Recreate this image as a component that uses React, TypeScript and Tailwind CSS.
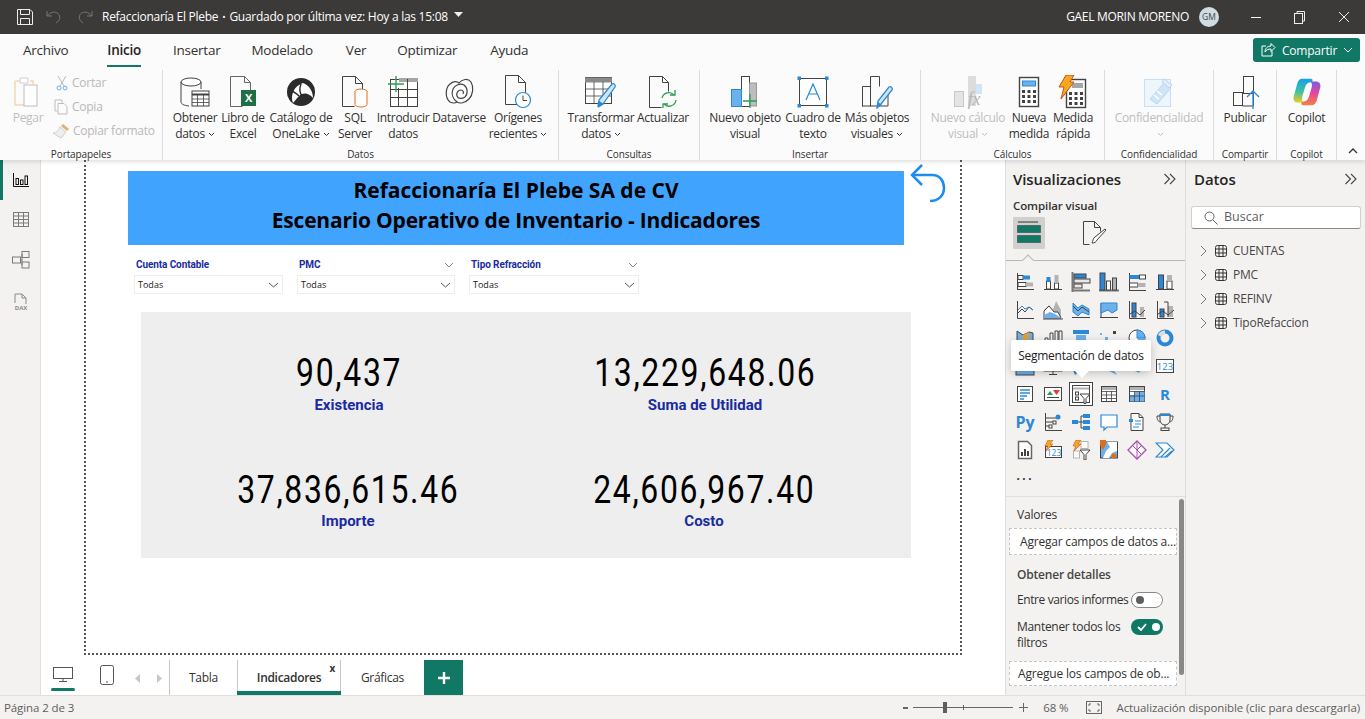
import React from "react";

const D = "#444342", B = "#2b88d8", L = "#6cb0ec", G = "#b3b3b3";

const S = ({ w = 20, h = 20, vb, children, className = "" }: { w?: number; h?: number; vb?: string; children?: React.ReactNode; className?: string }) => (
  <svg width={w} height={h} viewBox={vb ?? `0 0 ${w} ${h}`} fill="none" className={className}>{children}</svg>
);

const axisL = <path d="M2.5 1v17.5H19" stroke={D} />;
const axisB = <path d="M1 17.5h18" stroke={D} />;

const vizRow: React.ReactNode[] = [
  <S><path d="M2.5 1v17M2 17.5h17" stroke={D} /><rect x="3" y="3.5" width="5" height="4" fill="white" stroke={D} /><rect x="8" y="3.5" width="7" height="4" fill={B} /><rect x="3" y="10.5" width="8" height="4" fill="white" stroke={D} /><rect x="11" y="10.5" width="7" height="4" fill={G} /></S>,
  <S><path d="M1 17.5h18" stroke={D} /><rect x="3.5" y="9" width="4" height="8" fill="white" stroke={D} /><rect x="3.5" y="5" width="4" height="5" fill={B} /><rect x="11.5" y="11" width="4" height="6" fill="white" stroke={D} /><rect x="11.5" y="3" width="4" height="8" fill={G} /></S>,
  <S><path d="M1.5 0v20M1 18.5h18" stroke="#777" strokeWidth="2" /><rect x="3" y="2" width="12" height="4" fill={B} stroke={D} /><rect x="3" y="7" width="16" height="4" fill="#e8e8e8" stroke={D} /><rect x="3" y="12" width="8" height="4" fill="#e8e8e8" stroke={D} /></S>,
  <S><path d="M0 18.5h20" stroke="#777" strokeWidth="2" /><rect x="1" y="1" width="5" height="17" fill={B} stroke={D} /><rect x="7.5" y="9" width="4" height="9" fill="white" stroke={D} /><rect x="13.5" y="6" width="4" height="12" fill={G} stroke={D} /></S>,
  <S><path d="M2.5 1v18" stroke={D} /><rect x="2.5" y="3" width="10" height="4" fill={B} /><rect x="12.5" y="3" width="6" height="4" fill="white" stroke={D} /><rect x="2.5" y="11" width="8" height="4" fill="white" stroke={D} /><rect x="10.5" y="11" width="8" height="4" fill={G} /><path d="M2 18.5h17" stroke={D} /></S>,
  <S><path d="M1 17.5h18" stroke={D} /><rect x="3.5" y="3" width="5" height="14" fill={B} stroke={D} /><rect x="12" y="9" width="5" height="8" fill="white" stroke={D} /><rect x="12" y="3" width="5" height="6" fill={G} /></S>,

  <S>{axisL}<path d="M3 13l4-4 3 3 4-5 4 3" stroke={D} /><path d="M3 10l4-4 3 3 4-2 4 3" stroke={B} /></S>,
  <S><path d="M0 19h20" stroke={D} /><path d="M1 18v-8l5-5 4 5 3-9 5 9v8z" fill={G} /><path d="M1 18v-7l5-5 5 6 4 0 3 6z" fill="white" stroke={D} /><path d="M1 18v-3l6-3 5 2 6 4z" fill={L} /></S>,
  <S>{axisB}<path d="M2 3l5 5 4-3 7 4v6l-7-3-4 4-5-4z" fill={L} stroke={B} /><path d="M2 6l5 5 4-4 7 5" stroke={D} /></S>,
  <S><path d="M1 17.5h18M2 3v14" stroke={D} /><path d="M2 3h16v7l-5 3-4-3-7 3z" fill={L} stroke={B} /></S>,
  <S>{axisL}<rect x="5" y="3" width="4" height="14" fill={B} stroke={D} /><rect x="13" y="7" width="4" height="10" fill={G} /><path d="M3 14l5-3 5 4 5-5" stroke={D} /></S>,
  <S>{axisL}<rect x="5" y="9" width="4" height="8" fill={B} stroke={D} /><rect x="13" y="6" width="5" height="11" fill={G} /><path d="M9 2h4v15" stroke={D} /><path d="M3 14l5-3 5 4 6-5" stroke={D} /></S>,

  <S><path d="M2 3l6 4 6-3 4 1v12H2z" fill={L} stroke={D} /><path d="M8 7l-1 8 7-1 0-10z" fill="#e1a040" /></S>,
  <S>{axisB}<path d="M2 17v-7h3v7M7 17V5h3v12M12 17V3h3v14M16 17V3h3v14" stroke={D} /></S>,
  <S><rect x="2" y="2" width="16" height="4" fill={B} /><rect x="5" y="7" width="10" height="5" fill={L} /><rect x="7" y="13" width="6" height="5" fill={B} /></S>,
  <S><rect x="1" y="5" width="2" height="2" fill={L} /><rect x="6" y="9" width="3" height="3" fill={L} /><rect x="14" y="3" width="3" height="3" fill={D} /><rect x="9" y="14" width="2" height="2" fill={L} /></S>,
  <S><circle cx="10" cy="10" r="8" fill="white" stroke={D} /><path d="M10 2a8 8 0 0 1 8 8h-8z" fill={L} stroke={B} /><path d="M10 10h8a8 8 0 0 1-4 7z" fill={L} /></S>,
  <S><circle cx="10" cy="10" r="6.5" stroke={B} strokeWidth="4" /><path d="M3 7a7.500 7.500 0 0 1 7-4.500v4A3.500 3.500 0 0 0 6.500 9z" fill="#ddd" /></S>,

  <S><rect x="1" y="1" width="18" height="18" fill={L} stroke={D} /></S>,
  <S><rect x="1" y="1" width="18" height="14" stroke={D} /><path d="M6 18.500h8M10 15v3" stroke={D} /></S>,
  <S><path d="M2 14l6 2-4 3z" fill={B} /></S>,
  <S><path d="M8 14l10 5-4-6z" fill={L} /></S>,
  <S><path d="M4 6l3 2 5-1 4 4-4 6-6-3z" fill={L} /></S>,
  <S><rect x="1.500" y="3.500" width="17" height="13" fill="white" stroke={D} /><text x="10" y="14" textAnchor="middle" fontSize="9.500" fontFamily="'Open Sans',sans-serif" fill={B}>123</text></S>,

  <S><rect x="2.500" y="2.500" width="15" height="15" fill="white" stroke={D} /><path d="M5 6h10M5 9h10M5 12h7M5 15h4" stroke={B} strokeWidth="1.400" /></S>,
  <S><rect x="1.500" y="3.500" width="17" height="13" fill="white" stroke={D} /><path d="M4 11l3-4 3 4z" fill="#2d9d54" /><path d="M10 6h7l-3.500 5z" fill="#e23d3d" /><path d="M4 13.500h12" stroke={D} /></S>,
  <S w={24} h={24}><rect x="0.500" y="0.500" width="23" height="23" fill="white" stroke={D} /><rect x="3.500" y="3.500" width="17" height="17" stroke={D} /><path d="M4 6.500h16" stroke={G} strokeWidth="2" /><rect x="6.500" y="10" width="3" height="3" stroke={D} /><rect x="6.500" y="15" width="3" height="3" stroke={D} /><path d="M11 12h10l-4 4.500v5h-2v-5z" fill="white" stroke={D} /></S>,
  <S><rect x="2.500" y="2.500" width="15" height="15" fill="white" stroke={D} /><path d="M3 4.500h14" stroke={G} strokeWidth="3" /><path d="M2.500 7.500h15M2.500 11h15M2.500 14.500h15M7.500 7v10M12.500 7v10" stroke={D} strokeWidth=".8" /></S>,
  <S><rect x="2.500" y="2.500" width="15" height="15" fill="white" stroke={D} /><path d="M3 4.500h14" stroke={G} strokeWidth="3" /><rect x="8" y="7" width="9.500" height="10.500" fill={L} /><rect x="3" y="11" width="5" height="6.500" fill={L} /><path d="M2.500 7.500h15M2.500 12h15M7.500 7v10.500M12.500 7v10.500" stroke={D} strokeWidth=".8" /></S>,
  <S><text x="10" y="16" textAnchor="middle" fontSize="15" fontWeight="700" fontFamily="'Open Sans',sans-serif" fill={B}>R</text></S>,

  <S w={22} h={20}><text x="11" y="16" textAnchor="middle" fontSize="16" fontWeight="700" fontFamily="'Open Sans',sans-serif" fill={B}>Py</text></S>,
  <S>{axisL}<path d="M3 6h11M3 10h7M3 14h4" stroke={D} /><circle cx="15" cy="5" r="2.500" fill={B} /><rect x="10" y="9" width="3" height="3" fill="white" stroke={D} /><rect x="6" y="13" width="3" height="3" fill="white" stroke={D} /></S>,
  <S><rect x="1" y="8" width="6" height="4" fill={B} /><path d="M7 10h3M10 4v12M10 4h2M10 10h2M10 16h2" stroke={D} /><rect x="12" y="2" width="7" height="4" fill={B} /><rect x="12" y="8" width="7" height="4" fill={B} /><rect x="12" y="14" width="7" height="4" fill={B} /></S>,
  <S><path d="M2 3h16v12H8l-3 3v-3H2z" fill="white" stroke={B} strokeWidth="1.200" /></S>,
  <S><path d="M4 1.500h8l4 4v13H4z" fill="white" stroke={D} /><path d="M12 1.500v4h4" stroke={D} /><rect x="2" y="7" width="4" height="3" fill={B} /><path d="M8 9h6M8 12h6M6 15h6" stroke={B} /></S>,
  <S><path d="M5 2h10v6a5 5 0 0 1-10 0zM5 4H2c0 4 1 5 3 6M15 4h3c0 4-1 5-3 6M10 13v3" stroke={D} /><rect x="5" y="2" width="10" height="2" fill={B} /><rect x="6" y="16" width="8" height="2.500" stroke={D} /></S>,

  <S><path d="M3.500 1.500h9l4 4v13h-13z" fill="white" stroke="#666" strokeWidth="1.500" /><rect x="6" y="12" width="2" height="4" fill={D} /><rect x="9" y="9" width="2" height="7" fill={D} /><rect x="12" y="11" width="2" height="5" fill={D} /></S>,
  <S><rect x="2.500" y="6.500" width="16" height="11" fill="white" stroke={D} /><text x="11" y="15.500" textAnchor="middle" fontSize="8.500" fontFamily="'Open Sans',sans-serif" fill={B}>123</text><path d="M5 0h5L7 4h3L3 11l1.500-5H2z" fill="#f6a81e" stroke="#c8501e" strokeWidth=".6" /></S>,
  <S><rect x="10" y="1.500" width="7" height="7" fill="white" stroke={G} /><rect x="2.500" y="11" width="6" height="7" fill="white" stroke={G} /><path d="M9 10h10l-4 4.500V20h-2v-5.500z" fill="white" stroke={D} /><path d="M5 0h5L7 4h3L3 11l1.500-5H2z" fill="#f6a81e" stroke="#c8501e" strokeWidth=".6" /></S>,
  <S><rect x="1.500" y="2" width="17" height="16" fill={L} stroke={D} /><path d="M8 2l3 5-4 4-3 7h6l3-5 5-2V2z" fill="white" /><path d="M1 0h6v5l-3 5-3-5z" fill="#d9701f" /><circle cx="15" cy="16" r="2.500" fill="#d9701f" /></S>,
  <S><path d="M10 1l9 9-9 9-9-9z" fill="white" stroke="#a54fb0" strokeWidth="1.300" /><path d="M10 1v18M5 5l10 10M15 5l-5 5" stroke="#a54fb0" /></S>,
  <S><path d="M1 3h11l7 7-7 7H1l7-7z" fill="white" stroke={B} strokeWidth="1.200" /><path d="M6 17l9-9M10 17l7-6" stroke={B} strokeWidth="1.200" /></S>,
];

const ribbonText = "text-[12px] leading-[15.5px] tracking-[-0.3px]";

const Chev = () => <svg width="7" height="5" viewBox="0 0 7 5" className="inline ml-[3px] align-[1px]" fill="none"><path d="M1 1l2.500 2.500L6 1" stroke="currentColor" /></svg>;

function Btn({ w, icon, a, b, chev, dis }: { w: number; icon: React.ReactNode; a: string; b?: string; chev?: boolean; dis?: boolean }) {
  return (
    <div className={`flex flex-col items-center whitespace-nowrap ${ribbonText} ${dis ? "text-[#bfbebd]" : "text-[#323130]"}`} style={{ width: w }}>
      <div className="h-[40px] pt-[4px] flex items-center justify-center">{icon}</div>
      <div>{a}</div>
      {b && <div>{b}{chev && <Chev />}</div>}
      {!b && chev && <div><Chev /></div>}
    </div>
  );
}

function Group({ w, pl = 0, label, center, children }: { w: number; pl?: number; label: string; center?: boolean; children: React.ReactNode }) {
  return (
    <div className="flex flex-col h-[90px] border-r border-[#dcdbd9] shrink-0 relative" style={{ width: w }}>
      <div className={`flex flex-1 ${center ? "justify-center" : ""}`} style={{ paddingLeft: pl }}>{children}</div>
      <div className="text-[10px] leading-[12px] text-[#323130] text-center tracking-[-0.1px]">{label}</div>
    </div>
  );
}

const Icons = {
  db: <S w={32} h={32}><ellipse cx="12" cy="6" rx="10" ry="4" fill="white" stroke={D} /><path d="M2 6v20c0 2 3 3.500 8 4M22 6v7" stroke={D} /><rect x="13" y="15" width="17" height="15" fill="white" stroke={D} /><path d="M13 18.500h17" stroke={D} strokeWidth="2" /><path d="M13 23h17M13 26.500h17M18.500 18v12M24.500 18v12" stroke={D} strokeWidth=".8" /></S>,
  xl: <S w={28} h={32}><path d="M1.500 .500h14l6 6v13M1.500 .500v30h12M15.500 .500v6h6" stroke="#666" /><rect x="12" y="14" width="15" height="16" fill="#1e7145" /><text x="19.500" y="26" textAnchor="middle" fontSize="11" fontWeight="700" fontFamily="'Open Sans',sans-serif" fill="white">X</text></S>,
  lake: <S w={30} h={32}><circle cx="15" cy="16" r="14" fill="#2b2b2b" /><path d="M7 27C4 19 8 10 17 7c6 2 10 8 10 15-4-5-10-6-14-2-2 2-4 5-6 7z" fill="white" /><path d="M15 8c-2 5-1 10 2 13 3 2 6 3 9 2" stroke="#2b2b2b" strokeWidth="1.400" /><path d="M13 20c-3-3-5-5-9-5" stroke="#2b2b2b" strokeWidth="1.400" /></S>,
  sql: <S w={28} h={32}><path d="M1.500 .500h13l7 7v11M1.500 .500v30h12M14.500 .500v7h7" stroke={D} /><ellipse cx="20" cy="15.500" rx="6" ry="2.500" fill="white" stroke="#d9701f" /><path d="M14 15.500v13c0 1.500 3 2.500 6 2.500s6-1 6-2.500v-13" fill="white" stroke="#d9701f" /></S>,
  enter: <S w={32} h={32}><rect x="3.500" y="3.500" width="27" height="27" fill="white" stroke={D} /><path d="M12 2h19v4H12z" fill="#a6a6a6" /><path d="M3 13.500h28M3 21.500h28M11.500 12v19M20.500 3v28" stroke={D} /><path d="M9 0v16M1 8h16" stroke="#2d9d54" strokeWidth="1.400" /></S>,
  dv: <S w={30} h={32}><path d="M6 26C1 22 1 12 6 8c3-3 7-3 9-1 3-4 9-5 12-1 3 5 2 13-2 17-4 4-9 5-12 3-3 2-5 1-7 0z" stroke={D} strokeWidth="1.200" /><path d="M13 26c-4-3-6-8-4-13 2-4 7-6 11-4 4 3 4 9 1 12-3 2-7 2-8-1-1-3 1-6 4-6 2 0 3 2 2 4" stroke={D} strokeWidth="1.200" /></S>,
  recent: <S w={28} h={34}><path d="M1.500 .500h13l7 7v12M1.500 .500v29h12M14.500 .500v7h7" stroke={D} /><circle cx="19" cy="25" r="7.500" fill="white" stroke={B} strokeWidth="1.200" /><path d="M19 20.500V25.500h4" stroke={D} /></S>,
  trans: <S w={34} h={34}><rect x="1.500" y="2.500" width="26" height="26" fill="white" stroke={D} /><path d="M1 5h27" stroke="#8a8a8a" strokeWidth="5" /><path d="M1 14h27M1 21h27M10 7v21M19 7v21" stroke={D} strokeWidth=".8" /><path d="M14 31l1-6 13-16c2-1 4 1 3 3L19 29z" fill="#cfe5f8" stroke={B} strokeWidth="1.300" /><path d="M14 33l1-7 5 3z" fill={B} /></S>,
  refresh: <S w={30} h={32}><path d="M1.500 .500h13l6 6v9M1.500 .500v31h12M14.500 .500v6h6" stroke={D} /><path d="M14 22a7 7 0 0 1 12-3M28 24a7 7 0 0 1-12 4" stroke="#2d9d54" strokeWidth="1.300" /><path d="M27 14v5h-5M15 33v-5h5" stroke="#2d9d54" strokeWidth="1.300" /></S>,
  newv: <S w={30} h={34}><rect x="11.500" y="1.500" width="8" height="30" fill="white" stroke={D} /><rect x="19.500" y="8" width="7" height="23" fill="#bdbdbd" stroke="#999" /><rect x="1.500" y="14.500" width="10" height="17" fill={L} stroke={B} /><path d="M20 19v14M13 26h14" stroke="#2d9d54" strokeWidth="1.300" /></S>,
  box: <S w={32} h={32}><rect x="2.500" y="2.500" width="27" height="27" fill="white" stroke={D} /><rect x="0.500" y="0.500" width="3.500" height="3.500" fill={B} /><rect x="28" y="0.500" width="3.500" height="3.500" fill={B} /><rect x="0.500" y="28" width="3.500" height="3.500" fill={B} /><rect x="28" y="28" width="3.500" height="3.500" fill={B} /><path d="M9 24l7-16 7 16M11.500 18h9" stroke={B} strokeWidth="1.200" /></S>,
  more: <S w={32} h={34}><path d="M1.500 31.500v-20h8M9.500 31.500V1.500h9v10M27 14v17H1" stroke={D} /><path d="M16 33l1-7 11-14c2-1 4 1 3 3L20 29z" fill="#cfe5f8" stroke={B} strokeWidth="1.300" /><path d="M16 33l1-6 4 3z" fill={B} /></S>,
  calc: <S w={30} h={34}><rect x="15" y="1" width="8" height="30" fill="#dcdcdc" /><rect x="23" y="9" width="6" height="10" fill="#cfe5f8" /><rect x="1.500" y="16.500" width="9" height="15" fill="#e4e4e4" stroke="#c8c8c8" /><text x="21" y="30" textAnchor="middle" fontSize="18" fontStyle="italic" fontFamily="'Liberation Serif',serif" fill="#b5b5b5">fx</text></S>,
  measure: <S w={22} h={32}><rect x="1.500" y="1.500" width="19" height="29" fill="white" stroke={D} strokeWidth="1.400" /><rect x="4.500" y="5" width="13" height="5" fill={L} stroke={B} /><path d="M4 14h3v3H4zM9.500 14h3v3h-3zM15 14h3v3h-3zM4 19h3v3H4zM9.500 19h3v3h-3zM15 19h3v3h-3zM4 24h3v3H4zM9.500 24h3v3h-3zM15 24h3v3h-3z" fill={D} /></S>,
  quick: <S w={30} h={34}><rect x="8.500" y="4.500" width="19" height="28" fill="white" stroke={D} strokeWidth="1.400" /><rect x="14" y="8" width="11" height="5" fill="#a6a6a6" /><path d="M11 17h3v3h-3zM16.500 17h3v3h-3zM22 17h3v3h-3zM11 22h3v3h-3zM16.500 22h3v3h-3zM22 22h3v3h-3zM11 27h3v3h-3zM16.500 27h3v3h-3zM22 27h3v3h-3z" fill={D} /><path d="M8 0h8l-4 7h4L3 24l3-12H1z" fill="#f6a81e" stroke="#c8501e" /></S>,
  conf: <S w={32} h={32}><rect x="1.500" y="3.500" width="26" height="27" fill="#eef6fd" stroke="#c6e0f6" /><path d="M7 23L21 7l7 5-14 16z" fill="#cfe5f8" stroke="#b9d5ee" /><path d="M21 3l8 6-3 3-7-6z" fill="#dfeefb" stroke="#b9d5ee" /><path d="M11 19l5 4M14 15l5 4" stroke="white" strokeWidth="1.500" /></S>,
  pub: <S w={30} h={34} className="ml-[4px]"><rect x="11.500" y="1.500" width="10" height="17" stroke={D} /><rect x="1.500" y="17.500" width="9" height="13" stroke={D} /><path d="M21.500 15v16h-11" stroke={D} /><path d="M21 34V17M15 22l6-6 6 6" stroke={B} strokeWidth="1.300" /></S>,
  copilot: (
    <svg width="30" height="30" viewBox="0 0 34 34" fill="none">
      <defs>
        <linearGradient id="cpa" x1="0" y1="0" x2="0" y2="1"><stop offset="0" stopColor="#1a9fe8" /><stop offset=".55" stopColor="#3fc2a0" /><stop offset="1" stopColor="#f2cc1b" /></linearGradient>
        <linearGradient id="cpb" x1="0" y1="0" x2="0" y2="1"><stop offset="0" stopColor="#f5813a" /><stop offset=".5" stopColor="#e5469c" /><stop offset="1" stopColor="#7a5be8" /></linearGradient>
      </defs>
      <path d="M11 2h10c2 0 3 1 2 3l-1 1c-4 0-6 2-7 5l-3 10c-1 3-1 6 1 8H7c-4 0-6-3-5-7l4-15c1-3 3-5 5-5z" fill="url(#cpa)" />
      <path d="M11 2h10c2 0 3 1 2 3l-1 1c-4 0-6 2-7 5l-3 10c-1 3-1 6 1 8H7c-4 0-6-3-5-7l4-15c1-3 3-5 5-5z" fill="url(#cpb)" transform="rotate(180 17 17)" />
    </svg>
  ),
};

const DoubleChev = () => (
  <svg width="14" height="12" viewBox="0 0 14 12" fill="none"><path d="M1.500 1l5 5-5 5M7 1l5 5-5 5" stroke="#444" strokeWidth="1.100" /></svg>
);
const Table = () => (
  <svg width="12" height="12" viewBox="0 0 12 12" fill="none"><rect x=".5" y=".5" width="11" height="11" rx="2" stroke="#333" /><path d="M0 4h12M0 8h12M4 0v12M8 0v12" stroke="#333" /></svg>
);

const Slicer = ({ label, w, head }: { label: string; w: number; head?: boolean }) => (
  <div className="flex flex-col" style={{ width: w }}>
    <div className="flex items-center justify-between h-[15px] pl-[2px] pr-[1px] font-['Roboto',sans-serif] font-bold text-[10px] text-[#1a2ba0] tracking-[-0.1px]">
      <span>{label}</span>
      {head && <svg width="10" height="6" viewBox="0 0 10 6" fill="none"><path d="M1 1l4 4 4-4" stroke="#8a8a8a" /></svg>}
    </div>
    <div className="mt-[3px] h-[19px] border-[1px] border-[#eeeeee] bg-white flex items-center justify-between px-[3px] text-[9px] text-[#222]">
      <span>Todas</span>
      <svg width="11" height="6" viewBox="0 0 11 6" fill="none"><path d="M1 1l4.500 4L10 1" stroke="#555" /></svg>
    </div>
  </div>
);

const Kpi = ({ value, label, cls, lbl }: { value: string; label: string; cls: string; lbl: string }) => (
  <div className={`flex flex-col items-center ${cls}`}>
    <div className="font-['Roboto',sans-serif] text-[38px] leading-[42px] text-black tracking-[2px] scale-x-[0.84] whitespace-nowrap">{value}</div>
    <div className={`font-['Roboto',sans-serif] font-bold text-[15px] leading-[18px] text-[#1a2ba0] ${lbl}`}>{label}</div>
  </div>
);

const Toggle = ({ on }: { on?: boolean }) =>
  on ? (
    <div className="w-[32px] h-[16px] rounded-full bg-[#117865] flex items-center justify-between pl-[6px] pr-[3px] shrink-0">
      <svg width="10" height="8" viewBox="0 0 10 8" fill="none"><path d="M1 4l3 3 5-6" stroke="white" strokeWidth="1.800" /></svg>
      <div className="w-[8px] h-[8px] rounded-full bg-white" />
    </div>
  ) : (
    <div className="w-[32px] h-[16px] rounded-full bg-white border border-[#888] flex items-center pl-[4px] shrink-0">
      <div className="w-[8px] h-[8px] rounded-full bg-[#605e5c]" />
    </div>
  );

const tabs = ["Archivo", "Inicio", "Insertar", "Modelado", "Ver", "Optimizar", "Ayuda"];

export default function App() {
  return (
    <div className="w-[1365px] h-[719px] overflow-hidden flex flex-col font-['Open_Sans',sans-serif] text-[#323130] bg-[#f3f2f1]">
      {/* title bar */}
      <div className="h-[34px] bg-[#3b3a39] flex items-center shrink-0 text-white relative">
        <div className="flex items-center pl-[17px] gap-[13px]">
          <svg width="16" height="16" viewBox="0 0 16 16" fill="none"><path d="M.5.500h12.500l2.500 2.500v12.500H.5z" stroke="#eee" /><path d="M3.500.500v5h9v-5M3.500 15.500v-6h9v6" stroke="#eee" /></svg>
          <svg width="16" height="14" viewBox="0 0 16 14" fill="none"><path d="M1 1v5h5M1.500 6C4 2 9 1 12 3.500c3 3 2 7-2 9.500" stroke="#777" /></svg>
          <svg width="16" height="14" viewBox="0 0 16 14" fill="none" className="ml-[2px]"><path d="M15 1v5h-5M14.500 6C12 2 7 1 4 3.500c-3 3-2 7 2 9.500" stroke="#777" /></svg>
        </div>
        <div className="ml-[9px] text-[12px] tracking-[-0.27px] whitespace-nowrap flex items-center">
          Refaccionaría El Plebe<span className="mx-[4px] text-[9px]">•</span>Guardado por última vez: Hoy a las 15:08
          <svg width="9" height="5" viewBox="0 0 9 5" className="ml-[6px] mb-[5px]"><path d="M0 0h9L4.500 5z" fill="#eee" /></svg>
        </div>
        <div className="ml-auto flex items-center">
          <span className="text-[12px] tracking-[-0.3px] whitespace-nowrap">GAEL MORIN MORENO</span>
          <div className="ml-[10px] w-[20px] h-[20px] rounded-full bg-[#cfdce4] text-[#444] text-[8.500px] flex items-center justify-center">GM</div>
          <div className="ml-[32px] w-[10px] h-[1px] bg-white shrink-0" />
          <svg width="11" height="13" viewBox="0 0 11 13" fill="none" className="ml-[33px]"><rect x=".5" y="2.500" width="8" height="10" stroke="#eee" /><path d="M3 2V.500h7.500V10H9" stroke="#eee" /></svg>
          <svg width="12" height="12" viewBox="0 0 12 12" fill="none" className="ml-[33px] mr-[15px]"><path d="M1 1l10 10M11 1L1 11" stroke="#eee" /></svg>
        </div>
      </div>

      {/* ribbon */}
      <div className="h-[126px] bg-[#fbfbfb] shrink-0 flex flex-col relative z-10 shadow-[0_2px_4px_rgba(0,0,0,0.12)]">
        <div className="h-[36px] flex items-start relative">
          <div className="flex pl-[23px] pt-[7px] text-[13.500px] tracking-[-0.25px] leading-[18px]">
            {tabs.map((t, i) => (
              <div key={t} className={`relative whitespace-nowrap ${["mr-[39px]", "mr-[32px]", "mr-[31px]", "mr-[33px]", "mr-[31px]", "mr-[33px]", ""][i]} ${t === "Inicio" ? "font-semibold text-[#252423]" : ""}`}>
                {t}
                {t === "Inicio" && <div className="absolute left-0 right-0 -bottom-[8px] h-[2px] bg-[#117865]" />}
              </div>
            ))}
          </div>
          <div className="ml-auto mr-[5px] mt-[4px] w-[107px] h-[24px] rounded-[3px] bg-[#117865] text-white text-[12px] tracking-[-0.2px] flex items-center justify-center gap-[6px]">
            <svg width="16" height="16" viewBox="0 0 16 16" fill="none"><path d="M12 9v5H2V4h4" stroke="white" /><path d="M5 10c0-4 3-6 6-6V1.500l4 4-4 4V7c-3 0-5 1-6 3z" stroke="white" /></svg>
            <span className="mt-[1px]">Compartir</span>
            <svg width="10" height="6" viewBox="0 0 10 6" fill="none"><path d="M1 1l4 4 4-4" stroke="white" /></svg>
          </div>
        </div>
        <div className="flex relative">
          <Group w={163} label="Portapapeles">
            <div className="flex w-full">
              <div className={`w-[56px] flex flex-col items-center ${ribbonText} text-[#bfbebd]`}>
                <div className="h-[40px] pt-[4px] flex items-center">
                  <S w={30} h={32}><path d="M2 5h7M17 5h3v3M2 5v24h9" stroke="#f4d9b0" strokeWidth="1.500" /><path d="M7 2h8v5H7z" fill="white" stroke="#cfcfcf" /><rect x="11" y="9" width="13" height="21" fill="white" stroke="#bdbdbd" /></S>
                </div>
                <div>Pegar</div>
              </div>
              <div className="flex flex-col gap-[3px] pt-[2px] text-[12px] tracking-[-0.25px] text-[#b9b8b7] whitespace-nowrap">
                <div className="h-[21px] flex items-center gap-[4px]"><svg width="12" height="16" viewBox="0 0 12 16" fill="none"><path d="M2 1l6 10M10 1L4 11" stroke="#bdbdbd" /><circle cx="3" cy="13" r="2" stroke={L} /><circle cx="9" cy="13" r="2" stroke={L} /></svg>Cortar</div>
                <div className="h-[21px] flex items-center gap-[4px]"><svg width="14" height="16" viewBox="0 0 14 16" fill="none" className="-ml-[2px]"><path d="M3 12H1V1h7v3" stroke="#bdbdbd" /><path d="M4 4.500h6l3 3V15H4z" stroke="#bdbdbd" /></svg>Copia</div>
                <div className="h-[21px] flex items-center gap-[3px] -ml-[4px]"><svg width="18" height="16" viewBox="0 0 18 16" fill="none"><path d="M11 1l6 5-2 2-6-5z" fill="#e0b070" /><path d="M8 4l6 5-5 6-8-5c3 0 5-2 7-6z" fill="#eee" stroke="#cfcfcf" /></svg>Copiar formato</div>
              </div>
            </div>
          </Group>
          <Group w={396} pl={8} label="Datos">
            <Btn w={48} icon={Icons.db} a="Obtener" b="datos" chev />
            <Btn w={48} icon={Icons.xl} a="Libro de" b="Excel" />
            <Btn w={68} icon={Icons.lake} a="Catálogo de" b="OneLake" chev />
            <Btn w={40} icon={Icons.sql} a="SQL" b="Server" />
            <Btn w={56} icon={Icons.enter} a="Introducir" b="datos" />
            <Btn w={56} icon={Icons.dv} a="Dataverse" />
            <Btn w={62} icon={Icons.recent} a="Orígenes" b="recientes" chev />
          </Group>
          <Group w={141} pl={8} label="Consultas">
            <Btn w={68} icon={Icons.trans} a="Transformar" b="datos" chev />
            <Btn w={56} icon={Icons.refresh} a="Actualizar" />
          </Group>
          <Group w={221} pl={8} label="Insertar">
            <Btn w={74} icon={Icons.newv} a="Nuevo objeto" b="visual" />
            <Btn w={62} icon={Icons.box} a="Cuadro de" b="texto" />
            <Btn w={66} icon={Icons.more} a="Más objetos" b="visuales" chev />
          </Group>
          <Group w={184} pl={9} label="Cálculos">
            <Btn w={76} dis icon={Icons.calc} a="Nuevo cálculo" b="visual" chev />
            <Btn w={46} icon={Icons.measure} a="Nueva" b="medida" />
            <Btn w={42} icon={Icons.quick} a="Medida" b="rápida" />
          </Group>
          <Group w={109} center label="Confidencialidad">
            <Btn w={108} dis icon={Icons.conf} a="Confidencialidad" chev />
          </Group>
          <Group w={63} center label="Compartir">
            <Btn w={60} icon={Icons.pub} a="Publicar" />
          </Group>
          <Group w={60} center label="Copilot">
            <Btn w={58} icon={Icons.copilot} a="Copilot" />
          </Group>
          <div className="flex-1 flex items-end justify-end pb-[6px] pr-[7px]">
            <svg width="10" height="6" viewBox="0 0 10 6" fill="none"><path d="M1 5l4-4 4 4" stroke="#333" strokeWidth="1.300" /></svg>
          </div>
        </div>
      </div>

      {/* main */}
      <div className="flex-1 flex min-h-0">
        {/* left nav */}
        <div className="w-[41px] shrink-0 bg-[#f3f2f1] border-r border-[#e1dfdd] flex flex-col relative">
          <div className="absolute left-0 top-0 w-[3px] h-[40px] bg-[#117865]" />
          <div className="flex flex-col items-center pl-[1px] pt-[13px] gap-[25px]">
            <svg width="16" height="14" viewBox="0 0 16 14" fill="none"><path d="M.5 0v13.500H16" stroke="#111" /><rect x="3" y="5.500" width="2.500" height="6" stroke="#111" /><rect x="7.500" y="7" width="2.500" height="4.500" stroke="#111" /><rect x="12" y="3" width="2.500" height="8.500" stroke="#111" /></svg>
            <svg width="16" height="15" viewBox="0 0 16 15" fill="none"><rect x=".5" y=".5" width="15" height="14" stroke="#7a7a7a" /><path d="M0 4h16M0 7.500h16M0 11h16M5.500 0v15M10.500 0v15" stroke="#7a7a7a" /></svg>
            <svg width="18" height="18" viewBox="0 0 18 18" fill="none" className="-mt-[1px]"><rect x=".5" y="6" width="8" height="6" stroke="#7a7a7a" /><rect x="10" y=".5" width="7" height="6" stroke="#7a7a7a" /><rect x="10" y="11" width="7" height="6" stroke="#7a7a7a" /><path d="M8 9h2M10 3v11" stroke="#7a7a7a" /></svg>
            <svg width="18" height="18" viewBox="0 0 18 18" fill="none" className="-mt-[1px]"><path d="M3 10V1h7l4 4v6M10 1v4h4" stroke="#8a8a8a" /><text x="9" y="16.500" textAnchor="middle" fontSize="6" fontWeight="700" fontFamily="'Open Sans',sans-serif" fill="#8a8a8a">DAX</text></svg>
          </div>
        </div>

        {/* canvas */}
        <div className="w-[964px] shrink-0 bg-white flex flex-col">
          <div className="flex-1 min-h-0 pl-[43px]">
            <div className="w-[878px] h-[495px] border-2 border-t-0 border-dotted border-[#555] pl-[42px] pt-[11px]">
              <div className="flex items-start h-[74px]">
                <div className="w-[776px] h-[74px] shrink-0 bg-[#40a4ff] flex flex-col items-center pt-[4px] font-bold text-[21px] leading-[30px] text-black whitespace-nowrap">
                  <div>Refaccionaría El Plebe SA de CV</div>
                  <div className="tracking-[-0.2px]">Escenario Operativo de Inventario - Indicadores</div>
                </div>
                <svg width="36" height="42" viewBox="0 0 36 42" fill="none" className="ml-[6px] -mt-[9px] shrink-0"><path d="M12 3L2 13l10 10" stroke="#1d8cf0" strokeWidth="2.500" /><path d="M3 13h19c8 0 12 6 12 13s-5 13-14 13" stroke="#1d8cf0" strokeWidth="2.500" /></svg>
              </div>
              <div className="flex mt-[12px] ml-[6px]">
                <Slicer label="Cuenta Contable" w={149} />
                <div className="ml-[14px]"><Slicer label="PMC" w={158} head /></div>
                <div className="ml-[14px]"><Slicer label="Tipo Refracción" w={170} head /></div>
              </div>
              <div className="mt-[18px] ml-[13px] w-[770px] h-[246px] bg-[#eeeeee] grid grid-cols-2 grid-rows-[116px_130px]">
                <Kpi cls="pt-[40px] pl-[31px]" lbl="mt-[2px]" value="90,437" label="Existencia" />
                <Kpi cls="pt-[40px] pr-[27px]" lbl="mt-[2px]" value="13,229,648.06" label="Suma de Utilidad" />
                <Kpi cls="pt-[41px] pl-[29px]" lbl="mt-[1px]" value="37,836,615.46" label="Importe" />
                <Kpi cls="pt-[41px] pr-[29px]" lbl="mt-[1px]" value="24,606,967.40" label="Costo" />
              </div>
            </div>
          </div>
          {/* page tabs */}
          <div className="h-[35px] shrink-0 bg-white flex items-stretch">
            <div className="w-[128px] flex items-start relative">
              <div className="ml-[10px] w-[24px] h-[35px] flex flex-col items-center pt-[7px]">
                <svg width="20" height="15" viewBox="0 0 20 15" fill="none"><rect x=".5" y=".5" width="19" height="11" stroke="#555" /><path d="M10 12v2M6 14.500h8" stroke="#555" /></svg>
                <div className="mt-[6px] w-[24px] h-[3px] rounded bg-[#117865]" />
              </div>
              <svg width="14" height="20" viewBox="0 0 14 20" fill="none" className="ml-[25px] mt-[5px]"><rect x=".5" y=".5" width="13" height="19" rx="2" stroke="#555" /><path d="M6 17h2" stroke="#555" /></svg>
              <svg width="5" height="9" viewBox="0 0 5 9" className="ml-[21px] mt-[14px]"><path d="M5 0v9L0 4.500z" fill="#c8c6c4" /></svg>
              <svg width="5" height="9" viewBox="0 0 5 9" className="ml-[17px] mt-[14px]"><path d="M0 0v9l5-4.500z" fill="#c8c6c4" /></svg>
            </div>
            <div className="w-[68px] border-l border-[#c8c6c4] flex items-center justify-center text-[12px] tracking-[-0.25px]">Tabla</div>
            <div className="w-[104px] border-x border-[#c8c6c4] flex items-center justify-center text-[12px] font-semibold tracking-[-0.3px] relative">
              Indicadores
              <span className="absolute right-[5px] top-[2px] text-[10px] leading-[12px] font-bold">x</span>
              <div className="absolute -left-[1px] -right-[1px] bottom-0 h-[4px] bg-[#117865]" />
            </div>
            <div className="w-[83px] flex items-center justify-center text-[12px] tracking-[-0.3px]">Gráficas</div>
            <div className="w-[39px] bg-[#117865] flex items-center justify-center">
              <svg width="12" height="12" viewBox="0 0 12 12"><path d="M6 0v12M0 6h12" stroke="white" strokeWidth="2.400" /></svg>
            </div>
          </div>
        </div>

        {/* viz panel */}
        <div className="w-[181px] shrink-0 border-x border-[#dfdddb] bg-[#f3f2f1] flex flex-col relative">
          <div className="pl-[7px] pr-[8px] pt-[9px] flex items-center justify-between">
            <div className="text-[15px] leading-[20px] font-semibold tracking-[-0.1px] text-[#252423]">Visualizaciones</div>
            <DoubleChev />
          </div>
          <div className="pl-[7px] mt-[9px] text-[11.500px] leading-[16px] font-semibold tracking-[-0.1px]">Compilar visual</div>
          <div className="flex pl-[7px] mt-[3px] items-center">
            <div className="w-[32px] h-[32px] bg-[#d1d0cf] rounded-[1px] flex items-center justify-center">
              <svg width="24" height="24" viewBox="0 0 24 24" fill="none"><path d="M1 1h20" stroke="#333" /><rect x=".5" y="4.500" width="23" height="7" fill="#117865" stroke="#333" strokeDasharray="1 1" /><rect x=".5" y="14.500" width="23" height="7" fill="#117865" stroke="#333" strokeDasharray="1 1" /></svg>
            </div>
            <svg width="26" height="26" viewBox="0 0 26 26" fill="none" className="ml-[37px]"><path d="M1.500 24.500V1.500h11l6 6v4M12.500 1.500v6h6M1.500 24.500h6" stroke="#444" /><path d="M10 23c3 0 4-1 5-3l9-10-1-1-10 8c-2 1-2 4-3 6z" fill="white" stroke="#444" /></svg>
          </div>
          <div className="relative mt-[11px] h-[1px] bg-[#b9b8b7] mx-0">
            <div className="absolute left-[18px] -top-[4px] w-[8px] h-[8px] rotate-45 bg-[#f3f2f1] border-l border-t border-[#b9b8b7]" />
          </div>
          <div className="grid grid-cols-[repeat(6,28px)] auto-rows-[28px] pl-[5px] pt-[7px]">
            {vizRow.map((ic, i) => (
              <div key={i} className="flex items-center justify-center">{ic}</div>
            ))}
            <div className="flex items-center justify-center text-[14px] tracking-[2px] leading-[14px] font-semibold -mt-[7px]">...</div>
          </div>
          <div className="absolute left-[5px] top-[180px] w-[140px] h-[31px] rounded-[2px] bg-white shadow-[0_2px_8px_rgba(0,0,0,0.22)] flex items-center justify-center text-[12px] tracking-[-0.25px] text-[#222] whitespace-nowrap">
            Segmentación de datos
            <div className="absolute left-[66px] -bottom-[5px] w-[10px] h-[10px] rotate-45 bg-white" />
          </div>
          <div className="absolute left-0 right-0 top-[336px] h-[1px] bg-[#e1dfdd]" />
          <div className="absolute right-[1px] top-[339px] w-[5px] h-[176px] rounded bg-[#8a8886]" />
          <div className="pl-[3px] pr-[7px] text-[12px] tracking-[-0.2px] flex flex-col absolute left-0 right-0 top-[336px] mt-[2px]">
            <div className="pl-[8px] leading-[16px] mt-[-1px] pt-[10px]">Valores</div>
            <div className="mt-[5px] w-[168px] h-[27px] bg-white border border-dashed border-[#c8c6c4] pl-[10px] flex items-center whitespace-nowrap overflow-hidden">Agregar campos de datos a...</div>
            <div className="pl-[8px] mt-[12px] leading-[16px] font-semibold text-[#484644]">Obtener detalles</div>
            <div className="pl-[8px] mt-[9px] flex items-center h-[16px] w-[154px] justify-between whitespace-nowrap tracking-[-0.4px]">Entre varios informes <Toggle /></div>
            <div className="pl-[8px] mt-[11px] w-[154px] flex items-start justify-between leading-[16px] tracking-[-0.3px]">
              <span className="w-[110px]">Mantener todos los filtros</span>
              <Toggle on />
            </div>
            <div className="mt-[10px] w-[168px] h-[25px] bg-white border border-dashed border-[#c8c6c4] pl-[8px] flex items-center whitespace-nowrap overflow-hidden">Agregue los campos de ob...</div>
          </div>
        </div>

        {/* data panel */}
        <div className="flex-1 bg-[#f3f2f1] flex flex-col pl-[5px] pr-[4px]">
          <div className="pl-[3px] pr-[3px] pt-[9px] flex items-center justify-between">
            <div className="text-[15px] leading-[20px] font-semibold tracking-[-0.1px] text-[#252423]">Datos</div>
            <DoubleChev />
          </div>
          <div className="mt-[17px] h-[23px] w-[170px] bg-white rounded-[3px] border border-[#d2d0ce] border-b-[#8a8886] flex items-center pl-[12px] text-[12.500px] text-[#605e5c]">
            <svg width="14" height="14" viewBox="0 0 14 14" fill="none"><circle cx="5.500" cy="5.500" r="4.500" stroke="#605e5c" /><path d="M9 9l4.500 4.500" stroke="#605e5c" /></svg>
            <span className="ml-[6px]">Buscar</span>
          </div>
          <div className="mt-[10px] pl-[9px] flex flex-col text-[12px] tracking-[-0.2px] text-[#484644]">
            {["CUENTAS", "PMC", "REFINV", "TipoRefaccion"].map((t) => (
              <div key={t} className="h-[24px] flex items-center">
                <svg width="7" height="12" viewBox="0 0 7 12" fill="none"><path d="M1 1l5 5-5 5" stroke="#777" /></svg>
                <span className="ml-[8px]"><Table /></span>
                <span className="ml-[6px]">{t}</span>
              </div>
            ))}
          </div>
        </div>
      </div>

      {/* status */}
      <div className="h-[24px] shrink-0 border-t border-[#e1dfdd] bg-[#f3f2f1] flex items-center text-[11.500px] tracking-[-0.1px] text-[#605e5c]">
        <span className="pl-[4px]">Página 2 de 3</span>
        <div className="ml-auto flex items-center whitespace-nowrap">
          <span className="w-[5px] h-[2px] bg-[#666]" />
          <div className="ml-[5px] w-[100px] h-[1px] bg-[#666] relative">
            <div className="absolute left-[30px] -top-[5px] w-[4px] h-[11px] bg-[#605e5c]" />
            <div className="absolute left-[50px] -top-[2px] w-[1px] h-[5px] bg-[#666]" />
          </div>
          <svg width="9" height="9" viewBox="0 0 9 9" className="ml-[6px]"><path d="M4.500 0v9M0 4.500h9" stroke="#666" /></svg>
          <span className="ml-[15px]">68 %</span>
          <svg width="16" height="13" viewBox="0 0 16 13" fill="none" className="ml-[17px]"><rect x=".5" y=".5" width="15" height="12" stroke="#666" /><path d="M3 5V3h2M13 5V3h-2M3 8v2h2M13 8v2h-2" stroke="#666" /></svg>
          <span className="ml-[15px] pr-[5px]">Actualización disponible (clic para descargarla)</span>
        </div>
      </div>
    </div>
  );
}
